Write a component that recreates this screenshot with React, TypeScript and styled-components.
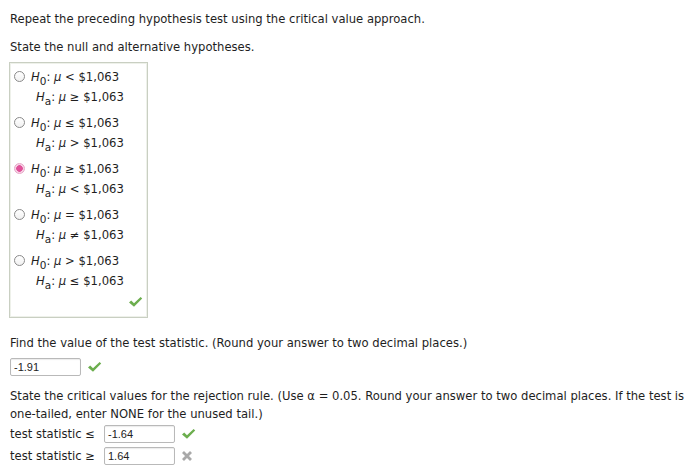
import React from "react";
import styled, { createGlobalStyle } from "styled-components";

const Global = createGlobalStyle`
  html, body { margin: 0; padding: 0; background: #ffffff; }
  body {
    font-family: "DejaVu Sans", Verdana, sans-serif;
    font-size: 11.6px;
    color: #1e1e1e;
  }
`;

const Page = styled.div`
  width: 700px;
  height: 469px;
  overflow: hidden;
  box-sizing: border-box;
  padding: 10px 0 0 10px;
  display: flex;
  flex-direction: column;
`;

const Para = styled.div<{ $mt?: number }>`
  line-height: 18px;
  margin-top: ${(p) => p.$mt ?? 0}px;
  white-space: nowrap;
`;

const ChoiceBox = styled.div`
  margin-top: 6px;
  margin-left: -1px;
  width: 139px;
  height: 256px;
  border: 1px solid #c9cfc2;
  box-shadow: inset 0 0 0 1px #eef1ea;
  display: flex;
  flex-direction: column;
  padding: 4px 0 0 2px;
  box-sizing: border-box;
  position: relative;
`;

const Option = styled.div`
  display: grid;
  grid-template-columns: 14px auto;
  column-gap: 5px;
  height: 46px;
`;

const Radio = styled.span<{ $checked?: boolean }>`
  width: 11px;
  height: 11px;
  border-radius: 50%;
  box-sizing: border-box;
  margin-top: 4px;
  margin-left: 2px;
  border: 1px solid ${(p) => (p.$checked ? "#e7a7c8" : "#8a8a8a")};
  background: ${(p) =>
    p.$checked
      ? "radial-gradient(circle, #e0529a 0 3px, #f6d3e5 3.6px)"
      : "linear-gradient(#ffffff, #f1f1f1)"};
`;

const Lines = styled.div`
  display: flex;
  flex-direction: column;
`;

const Line = styled.div<{ $indent?: boolean }>`
  line-height: 20px;
  padding-left: ${(p) => (p.$indent ? 5 : 0)}px;
  white-space: nowrap;
`;

const Hyp = styled.i`
  font-style: italic;
`;

const Sub = styled.sub`
  font-size: 10.5px;
  font-style: normal;
  vertical-align: -4px;
  line-height: 0;
`;

const Mu = styled.i`
  font-style: italic;
`;

const BoxCheck = styled.span`
  position: absolute;
  right: 4px;
  bottom: 6px;
`;

const Row = styled.div<{ $mt?: number }>`
  display: flex;
  align-items: center;
  margin-top: ${(p) => p.$mt ?? 0}px;
  height: 22px;
`;

const Label = styled.span`
  width: 94px;
  white-space: nowrap;
`;

const Input = styled.div`
  width: 71px;
  height: 18px;
  box-sizing: border-box;
  border: 1px solid #b9b9b9;
  border-radius: 2px;
  box-shadow: inset 0 1px 1px rgba(0, 0, 0, 0.08);
  font-family: "Liberation Sans", Arial, sans-serif;
  font-size: 11px;
  line-height: 16px;
  padding-left: 3px;
  color: #222;
`;

const Mark = styled.span`
  margin-left: 6px;
  display: inline-flex;
`;

const Check = () => (
  <svg width="15" height="12" viewBox="0 0 15 12">
    <path
      d="M1 6.5 L3.2 4.6 L6 7.3 L12.6 1 L14.2 2.6 L6 10.8 Z"
      fill="#6cae4e"
    />
  </svg>
);

const Cross = () => (
  <svg width="12" height="12" viewBox="0 0 12 12">
    <path
      d="M2 2 L10 10 M10 2 L2 10"
      stroke="#a9a9a9"
      strokeWidth="2.8"
      strokeLinecap="butt"
    />
  </svg>
);

type Opt = { h0: string; ha: string; checked?: boolean };
const options: Opt[] = [
  { h0: "<", ha: "≥" },
  { h0: "≤", ha: ">" },
  { h0: "≥", ha: "<", checked: true },
  { h0: "=", ha: "≠" },
  { h0: ">", ha: "≤" },
];

export default function App() {
  return (
    <>
      <Global />
      <Page>
        <Para>Repeat the preceding hypothesis test using the critical value approach.</Para>
        <Para $mt={10}>State the null and alternative hypotheses.</Para>
        <ChoiceBox>
          {options.map((o, i) => (
            <Option key={i}>
              <Radio $checked={o.checked} />
              <Lines>
                <Line>
                  <Hyp>H</Hyp>
                  <Sub>0</Sub>: <Mu>μ</Mu> {o.h0} $1,063
                </Line>
                <Line $indent>
                  <Hyp>H</Hyp>
                  <Sub>a</Sub>: <Mu>μ</Mu> {o.ha} $1,063
                </Line>
              </Lines>
            </Option>
          ))}
          <BoxCheck>
            <Check />
          </BoxCheck>
        </ChoiceBox>
        <Para $mt={16}>
          Find the value of the test statistic. (Round your answer to two decimal places.)
        </Para>
        <Row $mt={4}>
          <Input>-1.91</Input>
          <Mark>
            <Check />
          </Mark>
        </Row>
        <Para $mt={9}>
          State the critical values for the rejection rule. (Use α = 0.05. Round your answer to two
          decimal places. If the test is
          <br />
          one-tailed, enter NONE for the unused tail.)
        </Para>
        <Row>
          <Label>test statistic ≤</Label>
          <Input>-1.64</Input>
          <Mark>
            <Check />
          </Mark>
        </Row>
        <Row>
          <Label>test statistic ≥</Label>
          <Input>1.64</Input>
          <Mark>
            <Cross />
          </Mark>
        </Row>
      </Page>
    </>
  );
}
